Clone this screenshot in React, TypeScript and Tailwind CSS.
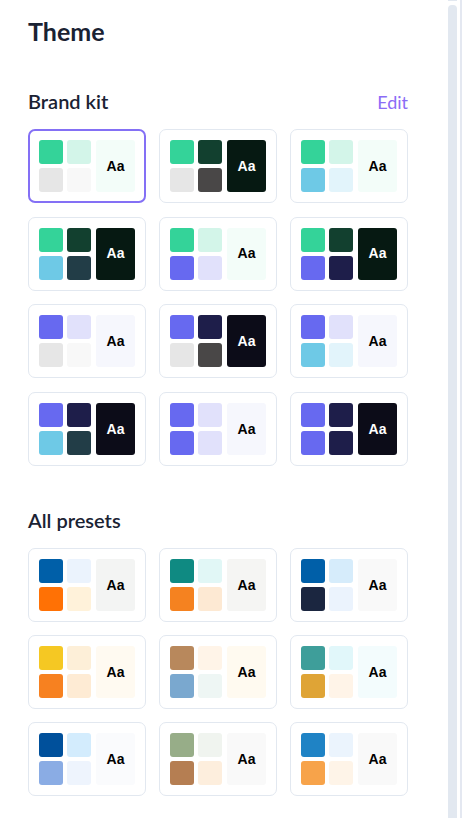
import React from 'react';

type Preset = { s: [string, string, string, string]; bg: string; dark?: boolean };

const brandKit: Preset[] = [
  { s: ['#34d399', '#d3f5e9', '#e6e6e6', '#f8f8f8'], bg: '#f3fdf9' },
  { s: ['#34d399', '#12402f', '#e6e6e6', '#494747'], bg: '#061912', dark: true },
  { s: ['#34d399', '#d3f5e9', '#6ec9e6', '#e2f4fb'], bg: '#f3fdf9' },
  { s: ['#34d399', '#12402f', '#6ec9e6', '#223d47'], bg: '#061912', dark: true },
  { s: ['#34d399', '#d3f5e9', '#6769f0', '#e1e1fb'], bg: '#f3fdf9' },
  { s: ['#34d399', '#12402f', '#6769f0', '#1e1e4a'], bg: '#061912', dark: true },
  { s: ['#6769f0', '#e1e1fb', '#e6e6e6', '#f8f8f8'], bg: '#f6f7fd' },
  { s: ['#6769f0', '#1e1e4a', '#e6e6e6', '#494747'], bg: '#0c0c18', dark: true },
  { s: ['#6769f0', '#e1e1fb', '#6ec9e6', '#e2f4fb'], bg: '#f6f7fd' },
  { s: ['#6769f0', '#1e1e4a', '#6ec9e6', '#223d47'], bg: '#0c0c18', dark: true },
  { s: ['#6769f0', '#e1e1fb', '#6769f0', '#e1e1fb'], bg: '#f6f7fd' },
  { s: ['#6769f0', '#1e1e4a', '#6769f0', '#1e1e4a'], bg: '#0c0c18', dark: true },
];

const allPresets: Preset[] = [
  { s: ['#005fa8', '#ebf3fd', '#ff7105', '#fff2da'], bg: '#f3f4f3' },
  { s: ['#0f8a82', '#e1f7f6', '#f58220', '#fde9d3'], bg: '#f5f5f3' },
  { s: ['#005fa8', '#d6ecfb', '#1b2640', '#ebf3fd'], bg: '#f9f9f9' },
  { s: ['#f5c823', '#fdefd8', '#f78120', '#feebd4'], bg: '#fffaf1' },
  { s: ['#b8885c', '#fff4e8', '#7aa8cf', '#eef6f4'], bg: '#fffaf0' },
  { s: ['#3e9e9a', '#e1f7fa', '#dfa436', '#fff4e8'], bg: '#f3fcfd' },
  { s: ['#00509b', '#d3ecfd', '#8aace4', '#eef4fd'], bg: '#fafbfd' },
  { s: ['#97ad88', '#f0f4ef', '#b57e52', '#fdeedd'], bg: '#f9f9f9' },
  { s: ['#1f83c5', '#ebf4fd', '#f7a34a', '#fef4e8'], bg: '#f9f9f9' },
];

function PresetCard({ p, selected }: { p: Preset; selected?: boolean }) {
  return (
    <div
      className={
        'h-[74px] rounded-[7px] bg-white flex items-center justify-center ' +
        (selected ? 'border-2 border-[#8470f5]' : 'border border-[#e2e8f0]')
      }
    >
      <div className="flex gap-[5px]">
        <div className="grid grid-cols-2 gap-[4px]">
          {p.s.map((c, i) => (
            <div key={i} className="w-[24px] h-[24px] rounded-[3px]" style={{ backgroundColor: c }} />
          ))}
        </div>
        <div
          className={
            'w-[39px] h-[52px] rounded-[3px] flex items-center justify-center text-[14px] font-bold ' +
            (p.dark ? 'text-white' : 'text-black')
          }
          style={{ backgroundColor: p.bg, fontFamily: '"Liberation Sans", Arial, sans-serif' }}
        >
          Aa
        </div>
      </div>
    </div>
  );
}

export default function App() {
  return (
    <div className="relative w-[470px] h-[818px] overflow-hidden bg-white font-['Lato',sans-serif] text-[#1a2233]">
      <div className="w-[380px] ml-[28px] pt-[14px]">
        <h1 className="text-[25px] leading-[34px] font-bold">Theme</h1>

        <div className="mt-[39px] flex items-baseline justify-between">
          <h2 className="text-[20px] leading-[28px] font-semibold">Brand kit</h2>
          <span className="text-[18px] text-[#8b6cf6]">Edit</span>
        </div>

        <div className="mt-[13px] grid grid-cols-3 gap-x-[13px] gap-y-[13.7px]">
          {brandKit.map((p, i) => (
            <PresetCard key={i} p={p} selected={i === 0} />
          ))}
        </div>

        <h2 className="mt-[40px] text-[20px] leading-[28px] font-semibold">All presets</h2>

        <div className="mt-[14px] grid grid-cols-3 gap-x-[13px] gap-y-[13px]">
          {allPresets.map((p, i) => (
            <PresetCard key={i} p={p} />
          ))}
        </div>

        <div className="mt-[19px] pl-[32px] text-[16px] leading-[20px] text-[#7c5cf0] font-semibold">Show all</div>
      </div>

      <div className="absolute left-[448px] top-0 w-[9px] h-[1px] bg-[#e2e8f0]" />
      <div className="absolute left-[448px] top-[5px] bottom-0 w-[9px] rounded-t-[4px] bg-[#e2e8f0]" />
      <div className="absolute left-[460px] top-0 bottom-0 w-[2px] bg-[#e4e8f1]" />
    </div>
  );
}
